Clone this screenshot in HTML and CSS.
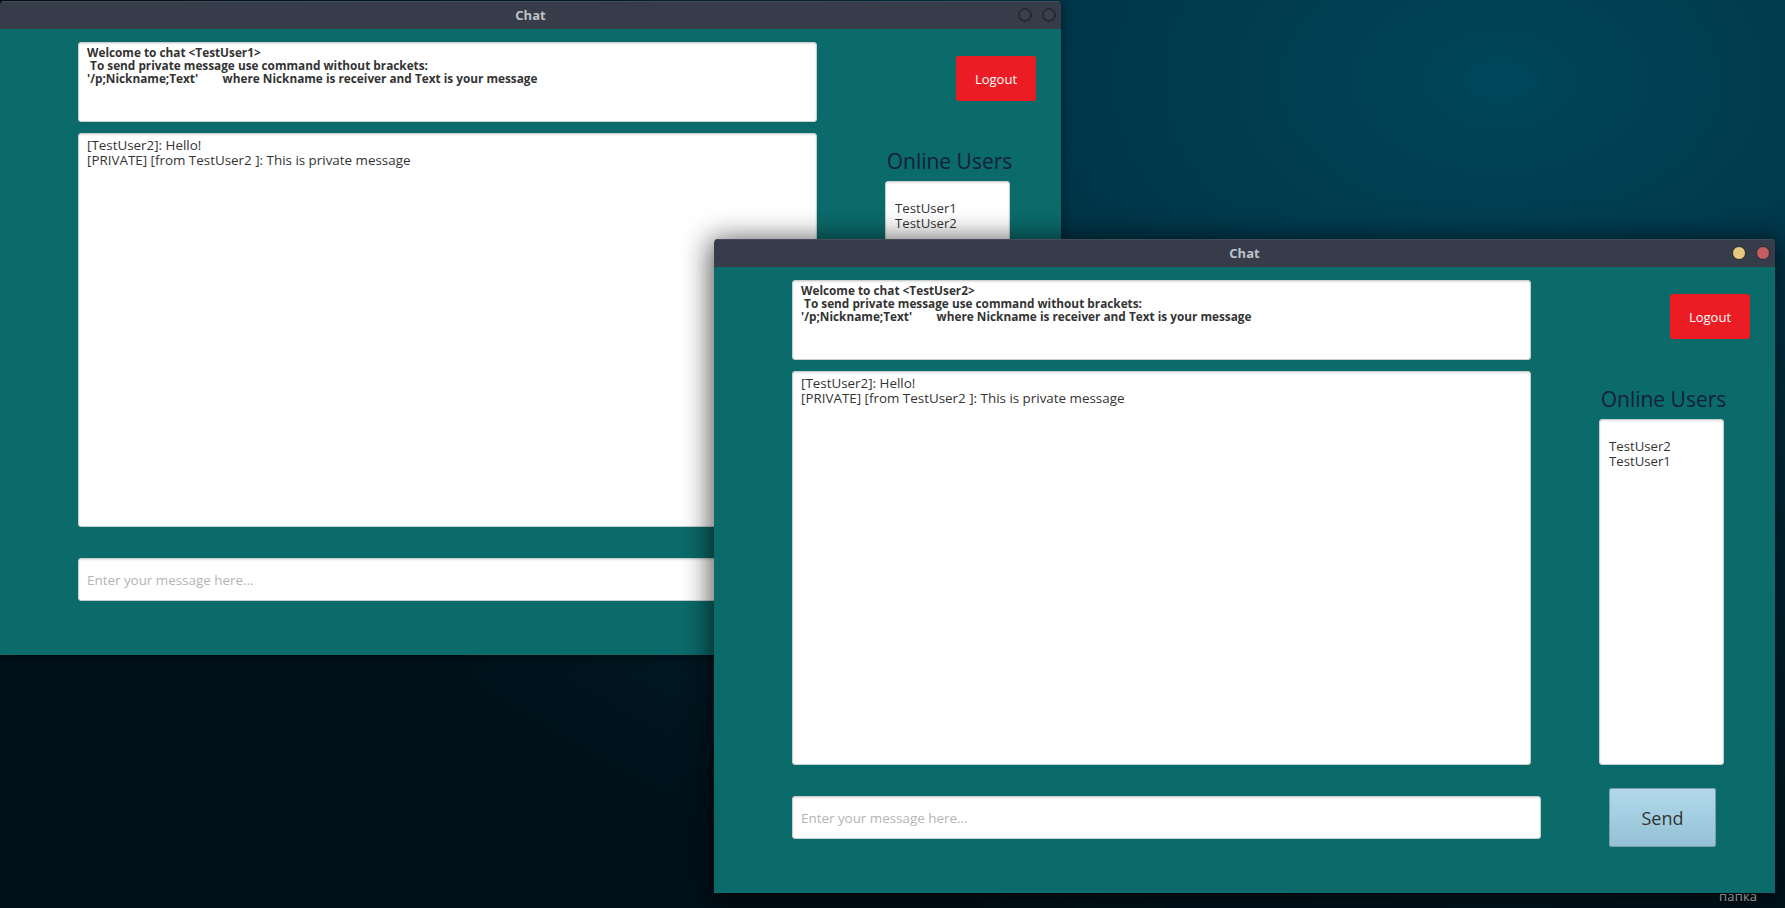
FILE: index.html
```html
<!DOCTYPE html>
<html>
<head>
<meta charset="utf-8">
<title>Chat</title>
<link rel="stylesheet" href="styles.css">
</head>
<body>
<div class="desktop">
  <div class="desk-label">папка</div>

  <div class="window w1 inactive">
    <div class="titlebar">
      <span class="title">Chat</span>
      <div class="controls">
        <span class="dot dot-min"></span>
        <span class="dot dot-close"></span>
      </div>
    </div>
    <div class="content">
      <div class="row row-top">
        <div class="info">Welcome to chat &lt;TestUser1&gt;
 To send private message use command without brackets:
'/p;Nickname;Text'        where Nickname is receiver and Text is your message</div>
        <button class="logout">Logout</button>
      </div>
      <div class="row row-mid">
        <div class="chat">[TestUser2]: Hello!
[PRIVATE] [from TestUser2 ]: This is private message</div>
        <div class="side">
          <div class="side-title">Online Users</div>
          <div class="users">
TestUser1
TestUser2</div>
        </div>
      </div>
      <div class="row row-bottom">
        <input class="msg" type="text" placeholder="Enter your message here...">
        <button class="send">Send</button>
      </div>
    </div>
  </div>

  <div class="window w2">
    <div class="titlebar">
      <span class="title">Chat</span>
      <div class="controls">
        <span class="dot dot-min"></span>
        <span class="dot dot-close"></span>
      </div>
    </div>
    <div class="content">
      <div class="row row-top">
        <div class="info">Welcome to chat &lt;TestUser2&gt;
 To send private message use command without brackets:
'/p;Nickname;Text'        where Nickname is receiver and Text is your message</div>
        <button class="logout">Logout</button>
      </div>
      <div class="row row-mid">
        <div class="chat">[TestUser2]: Hello!
[PRIVATE] [from TestUser2 ]: This is private message</div>
        <div class="side">
          <div class="side-title">Online Users</div>
          <div class="users">
TestUser2
TestUser1</div>
        </div>
      </div>
      <div class="row row-bottom">
        <input class="msg" type="text" placeholder="Enter your message here...">
        <button class="send">Send</button>
      </div>
    </div>
  </div>
</div>
</body>
</html>
```
FILE: styles.css
```css
* { box-sizing: border-box; }

html, body {
  margin: 0;
  padding: 0;
  width: 1785px;
  height: 908px;
  overflow: hidden;
}

body {
  font-family: "Open Sans", "Noto Sans", sans-serif;
}

.desktop {
  position: relative;
  width: 1785px;
  height: 908px;
  background:
    radial-gradient(ellipse 1400px 900px at 1500px 80px, #00465a 0%, #003447 35%, #00202d 70%, #00111a 100%);
}

.desk-label {
  position: absolute;
  left: 1719px;
  top: 887px;
  font-size: 13px;
  color: #e4e8ea;
  text-shadow: 0 1px 2px rgba(0,0,0,0.9);
  letter-spacing: 0.2px;
}

.window {
  position: absolute;
  width: 1061px;
  height: 654px;
  display: flex;
  flex-direction: column;
  border-radius: 4px 4px 0 0;
  overflow: hidden;
}

.w1 {
  left: 0;
  top: 1px;
  box-shadow: 0 2px 10px rgba(0,0,0,0.5);
}

.w2 {
  left: 714px;
  top: 239px;
  box-shadow: 0 4px 28px 4px rgba(0,0,0,0.65);
}

.titlebar {
  position: relative;
  height: 28px;
  flex: none;
  background: #363c4a;
  border-top: 1px solid #454b59;
  display: flex;
  align-items: center;
  justify-content: center;
  padding-bottom: 2px;
}

.title {
  font-family: "Open Sans", sans-serif;
  font-weight: 700;
  font-size: 13px;
  color: #bfc3c9;
}

.controls {
  position: absolute;
  right: 5px;
  top: 6px;
  display: flex;
  gap: 10px;
}

.dot {
  width: 14px;
  height: 14px;
  border-radius: 50%;
  border: 1px solid #252a33;
}

.w2 .dot-min { background: #e6c97f; }
.w2 .dot-close { background: #c45c62; }
.inactive .dot { background: #3b404d; border: 2px solid #262a33; }

.content {
  flex: 1;
  background: #0b6a6a;
  padding: 13px 0 0 78px;
  display: flex;
  flex-direction: column;
}

.row {
  display: flex;
}

.row-top {
  height: 80px;
}

.row-mid {
  margin-top: 11px;
  height: 394px;
}

.row-bottom {
  margin-top: 31px;
  height: 43px;
  align-items: center;
}

.info, .chat, .users, .msg {
  background: #ffffff;
  border: 1px solid #c9cfcf;
  border-radius: 3px;
  box-shadow: inset 0 1px 2px rgba(0,0,0,0.12);
}

.info {
  width: 739px;
  padding: 3px 8px;
  font-family: "Open Sans", sans-serif;
  font-weight: 700;
  font-size: 11.8px;
  line-height: 13px;
  color: #333333;
  white-space: pre;
}

.logout {
  margin: 14px 0 0 139px;
  width: 80px;
  height: 45px;
  background: #ec1c24;
  border: none;
  border-radius: 3px;
  color: #ffffff;
  font-family: "Open Sans", sans-serif;
  font-size: 13px;
  padding: 0;
}

.chat {
  width: 739px;
  padding: 4px 8px;
  font-size: 13.4px;
  line-height: 15px;
  color: #333333;
  white-space: pre;
}

.side {
  margin-left: 68px;
  width: 125px;
  display: flex;
  flex-direction: column;
}

.side-title {
  margin-top: 15px;
  height: 33px;
  margin-left: -10px;
  margin-right: -10px;
  font-size: 21px;
  line-height: 26px;
  color: #14203a;
  text-align: center;
  white-space: nowrap;
  padding-left: 4px;
}

.users {
  flex: 1;
  padding: 4px 9px;
  font-size: 13.2px;
  line-height: 15px;
  color: #333333;
  white-space: pre;
}

.msg {
  width: 749px;
  height: 43px;
  padding: 0 8px;
  font-family: "Open Sans", sans-serif;
  font-size: 13.4px;
  color: #333333;
  outline: none;
}

.msg::placeholder {
  color: #b4b4b4;
}

.send {
  margin-left: 68px;
  width: 107px;
  height: 59px;
  background: linear-gradient(#b1d9eb, #95c1d6);
  border: 1px solid #7f9ea8;
  border-radius: 2px;
  color: #333333;
  font-family: "Open Sans", sans-serif;
  font-size: 18px;
  padding: 0;
}
```
